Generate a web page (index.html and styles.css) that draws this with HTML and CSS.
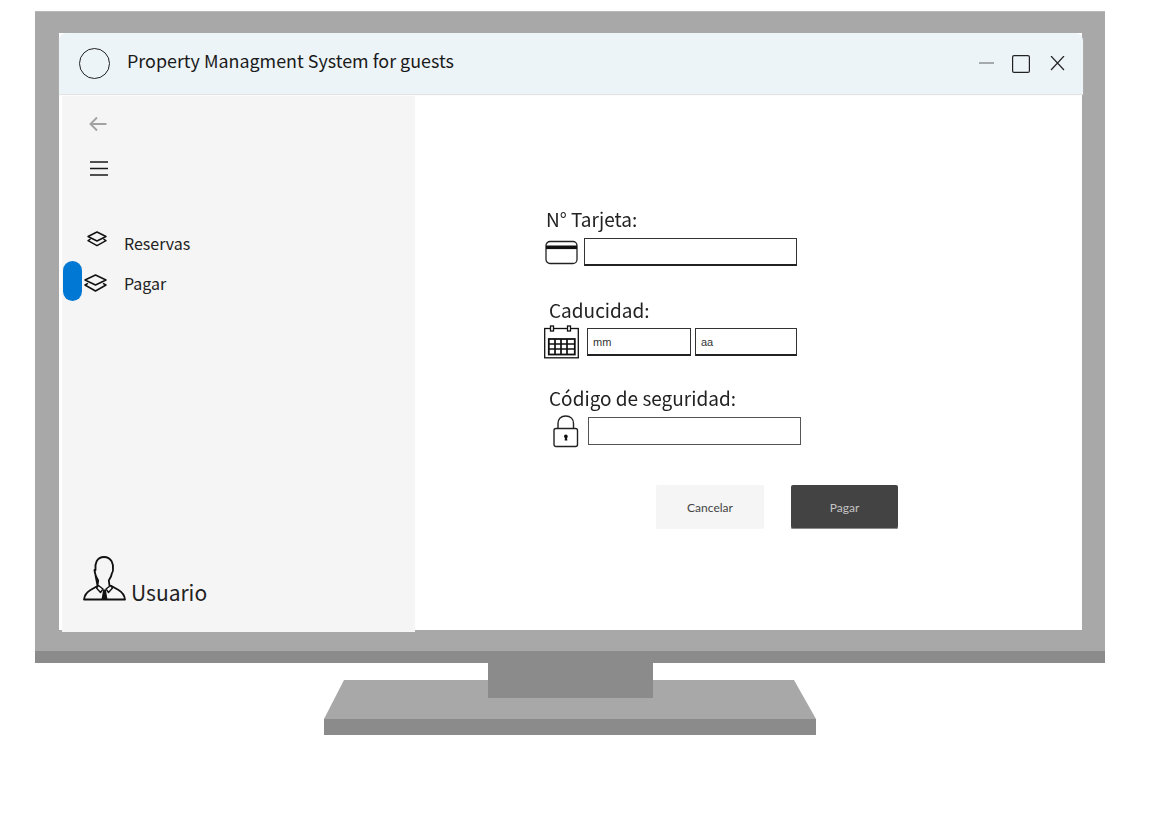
FILE: index.html
```html
<!DOCTYPE html>
<html lang="es">
<head>
<meta charset="utf-8">
<title>Property Managment System for guests</title>
<link rel="stylesheet" href="styles.css">
</head>
<body>
<div class="monitor">
  <div class="bezel">
    <div class="screen">
      <header class="titlebar">
        <span class="logo"></span>
        <span class="app-title">Property Managment System for guests</span>
        <div class="window-controls">
          <svg class="ctl" width="15" height="16" viewBox="0 0 15 16"><path d="M0 7h15" stroke="#7d8387" stroke-width="1.3" fill="none"/></svg>
          <svg class="ctl" width="18" height="18" viewBox="0 0 18 18"><rect x=".6" y=".6" width="16.8" height="16.8" rx="1.5" stroke="#222" stroke-width="1.2" fill="none"/></svg>
          <svg class="ctl ctl-close" width="15" height="16" viewBox="0 0 15 16"><path d="M1 0l13 14M14 0L1 14" stroke="#222" stroke-width="1.2" fill="none"/></svg>
        </div>
      </header>
      <div class="content">
        <aside class="sidebar">
          <svg class="back" width="18" height="16" viewBox="0 0 18 16"><path d="M17.500 8H1.500M8 1.500L1.500 8 8 14.500" stroke="#a3a3a3" stroke-width="1.900" fill="none"/></svg>
          <svg class="menu" width="18" height="15" viewBox="0 0 18 15"><path d="M0 1h18M0 7.500h18M0 14h18" stroke="#1a1a1a" stroke-width="1.500" fill="none"/></svg>
          <nav class="nav">
            <a class="nav-item nav-first">
              <svg class="layers" width="20" height="16" viewBox="0 0 20 16"><path d="M10 1l9 4.500-9 4.500-9-4.500zM3.500 8.200L1 9.700l9 5 9-5-2.500-1.500" stroke="#111" stroke-width="1.400" fill="none" stroke-linejoin="round"/></svg>
              <span class="nav-label">Reservas</span>
            </a>
            <a class="nav-item nav-active">
              <span class="pill"></span>
              <svg class="layers-big" width="23" height="18" viewBox="0 0 23 18"><path d="M11.500 1l10.500 5-10.500 5-10.500-5zM4 9.300L1 11l10.500 6 10.500-6-3-1.700" stroke="#111" stroke-width="1.500" fill="none" stroke-linejoin="round"/></svg>
              <span class="nav-label">Pagar</span>
            </a>
          </nav>
          <div class="user">
            <svg width="43" height="45" viewBox="0 0 43 45"><g stroke="#111" stroke-width="1.800" fill="none" stroke-linejoin="round" stroke-linecap="round"><path d="M12.500 14c-.8-6 1-13 8.500-13s9.800 7 9 13c-.2 2.500-1 3-1 3-.6 3.500-2.200 6-3.200 7.500l.7 5M14.500 29.500l.7-5c-1-1.500-2.600-4-3.200-7.500 0 0-.3-.5-.5-3z"/><path d="M14.500 30l-7 4C4 36 1.500 39.500 1 43.500h41c-.5-4-3-7.500-6.500-9.500l-7-4"/></g><g stroke="#111" stroke-width="1.400" fill="none" stroke-linejoin="round"><path d="M15.500 29.500l4.500 3.500-2.500 3.500-4-4.500z"/><path d="M27.500 29.500l-4.500 3.500 2.500 3.500 4-4.500z"/></g><path d="M20.200 33.500h2.600l1.700 10h-6z" fill="#111"/></svg>
            <span class="user-name">Usuario</span>
          </div>
        </aside>
        <main class="main">
          <form class="pay-form">
            <div class="label label-card">N° Tarjeta:</div>
            <div class="row row-card">
              <svg width="33" height="25" viewBox="0 0 33 25"><rect x="1" y="1.500" width="31" height="22" rx="4" stroke="#222" stroke-width="1.300" fill="none"/><rect x="1" y="5.500" width="31" height="3.600" fill="#111"/></svg>
              <span class="field field-card"></span>
            </div>
            <div class="label label-exp">Caducidad:</div>
            <div class="row row-exp">
              <svg width="35" height="34" viewBox="0 0 35 34"><g stroke="#111" fill="none"><rect x=".7" y="3.500" width="33.600" height="29.300" stroke-width="1.300"/><rect x="6.500" y="1" width="3" height="5" fill="#fff" stroke-width="1.300"/><rect x="23.500" y="1" width="3" height="5" fill="#fff" stroke-width="1.300"/><rect x="4.800" y="14" width="26" height="15.500" stroke-width="1.800"/><path d="M5 19h26M5 24h26M11 14v15.500M17 14v15.500M23 14v15.500" stroke-width="1.700"/></g></svg>
              <span class="field field-mm">mm</span>
              <span class="field field-aa">aa</span>
            </div>
            <div class="label label-code">Código de seguridad:</div>
            <div class="row row-code">
              <svg width="26" height="33" viewBox="0 0 26 33"><g stroke="#222" stroke-width="1.400" fill="none"><rect x="1" y="13.500" width="23.500" height="18" rx="2"/><path d="M5 13.500V8.500C5 4 8 1 12.700 1s7.800 3 7.800 7.500v5"/></g><path d="M11 21.500a1.900 1.900 0 1 1 3 1.500l.4 2.500h-2.800l.4-2.500a1.900 1.900 0 0 1-1-1.500z" fill="#111"/></svg>
              <span class="field field-code"></span>
            </div>
            <div class="actions">
              <button class="btn btn-cancel" type="button">Cancelar</button>
              <button class="btn btn-pay" type="button">Pagar</button>
            </div>
          </form>
        </main>
      </div>
    </div>
  </div>
  <div class="chin"></div>
  <div class="stand">
    <div class="neck"></div>
    <div class="base-top"></div>
    <div class="base-front"></div>
  </div>
</div>
</body>
</html>
```
FILE: styles.css
```css
* { box-sizing: border-box; }
html, body { margin: 0; padding: 0; background: #fff; }
body { height: 836px; overflow: hidden; font-family: "Noto Sans CJK SC", "Noto Sans", sans-serif; color: #1c1c1c; }

.monitor { width: 1070px; margin: 11px 0 0 35px; }
.bezel { height: 640px; padding: 22px 23px 21px 24px; background: #a8a8a8; box-shadow: inset 0 1px 0 #b8b8b8; }
.chin { height: 12px; background: #8b8b8b; }
.screen { height: 597px; background: #fff; display: flex; flex-direction: column; }

.titlebar { flex: none; height: 61px; margin-right: -1px; padding: 0 18px 0 20px; display: flex; align-items: center; background: #edf4f8; border-radius: 8px 8px 0 0; box-shadow: 0 1px 1px #dfe1e2; }
.logo { width: 31px; height: 31px; border: 1px solid #222; border-radius: 50%; }
.app-title { margin: 0 0 8px 17px; font-size: 17.900px; line-height: 26px; color: #1a1a1a; }
.window-controls { margin-left: auto; display: flex; align-items: center; gap: 18px; }
.ctl-close { margin-left: 2px; }

.content { flex: 1; display: flex; min-height: 0; }
.sidebar { width: 353px; height: 536px; margin: 2px 0 0 3px; padding: 20px 0 0; background: #f5f5f5; display: flex; flex-direction: column; }
.back { margin-left: 27px; display: block; flex: none; }
.menu { margin: 29px 0 0 28px; display: block; flex: none; }
.nav { margin-top: 53px; display: flex; flex-direction: column; }
.nav-item { display: flex; align-items: center; font-size: 16px; color: #222; }
.nav-first { height: 28px; padding-left: 25px; }
.nav-first .layers { margin-top: -8px; }
.nav-first .nav-label { margin-left: 17px; }
.nav-active { height: 40px; margin-top: 4px; }
.pill { width: 19px; height: 40px; margin-left: .5px; border-radius: 10px; background: #0078d4; }
.layers-big { margin: 4px 0 0 2.500px; }
.nav-active .nav-label { margin: 4px 0 0 17px; }
.user { margin: auto 0 0 21px; padding-bottom: 31px; display: flex; align-items: flex-end; }
.user svg { display: block; }
.user-name { margin: 0 0 -6px 5px; font-size: 21px; line-height: 30px; color: #222; }

.main { flex: 1; min-width: 0; }
.pay-form { padding: 113px 0 0 128px; }
.label { font-family: "Noto Sans CJK SC", "Noto Sans", sans-serif; font-size: 19px; line-height: 24px; color: #222; filter: blur(.3px); }
.label-card { margin-left: 3px; }
.label-exp { margin: 32px 0 0 6px; }
.label-code { margin: 30px 0 0 6px; }
.row { display: flex; align-items: center; }
.row-card { height: 28px; margin-top: 7px; padding-left: 2px; }
.row-exp { height: 28px; margin-top: 6px; padding-left: 1px; }
.row-code { height: 28px; margin-top: 7px; padding-left: 10px; }
.row svg { display: block; flex: none; }
.field { display: block; height: 28px; padding-left: 5px; background: #fff; border: 1px solid #333; border-bottom: 2px solid #222; font-family: "Liberation Sans", sans-serif; font-size: 11px; line-height: 26px; color: #333; }
.field-card { width: 213px; margin-left: 6px; }
.field-mm { width: 104px; margin-left: 8px; }
.field-aa { width: 102px; margin-left: 4px; }
.field-code { width: 213px; margin-left: 9px; border: 1px solid #555; }

.actions { margin: 40px 0 0 113px; display: flex; gap: 27px; }
.btn { height: 44px; padding: 0; border: 0; border-radius: 2px; font-family: "Lato", sans-serif; font-size: 12px; font-weight: 400; }
.btn-cancel { width: 108px; background: #f5f5f5; color: #444; }
.btn-pay { width: 107px; background: #434343; color: #c4c4c4; box-shadow: inset 0 -1px 0 #8a8a8a; }

.stand { position: relative; width: 492px; margin: 17px 0 0 289px; }
.neck { position: absolute; z-index: 1; left: 163.500px; top: -17px; width: 165px; height: 35px; background: #8b8b8b; }
.base-top { height: 39px; background: #a8a8a8; clip-path: polygon(20px 0, 470px 0, 100% 100%, 0 100%); }
.base-front { height: 16px; background: #8b8b8b; }
```
